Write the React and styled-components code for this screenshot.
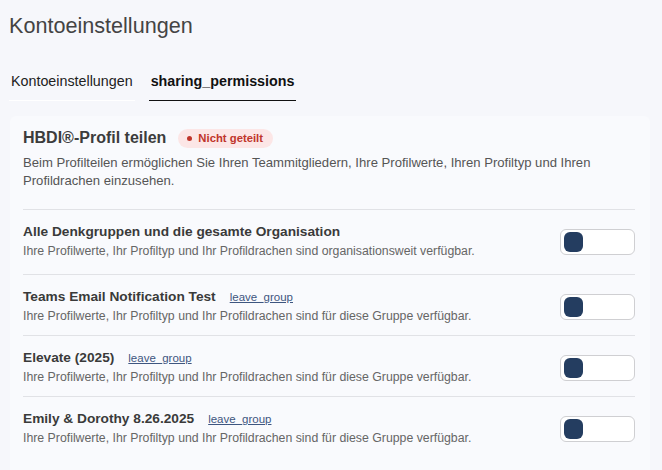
import React from 'react'
import styled, { createGlobalStyle } from 'styled-components'

const GlobalStyle = createGlobalStyle`
  body {
    margin: 0;
    background: #f6f7fb;
    font-family: "Liberation Sans", Arial, sans-serif;
  }
`

const Page = styled.div`
  width: 662px;
  height: 470px;
  overflow: hidden;
  padding: 12px 12px 0 9px;
  box-sizing: border-box;
`

const PageTitle = styled.h1`
  margin: 0;
  font-size: 21.6px;
  font-weight: 400;
  line-height: 28px;
  color: #444;
`

const Tabs = styled.div`
  display: flex;
  gap: 14px;
  margin-top: 33px;
`

const Tab = styled.div`
  padding: 0 2px 10px;
  font-size: 14.3px;
  line-height: 17px;
  color: ${p => (p.$active ? '#111' : '#222')};
  font-weight: ${p => (p.$active ? 700 : 400)};
  border-bottom: ${p => (p.$active ? '1.5px solid #111' : '1.5px solid #fff')};
`

const Card = styled.section`
  margin: 15px 0 0 1px;
  padding: 12px 15px 20px 13px;
  background: #f9fafd;
  border-radius: 6px;
`

const HeadRow = styled.div`
  display: flex;
  align-items: center;
  gap: 12px;
`

const CardTitle = styled.h2`
  margin: 0;
  font-size: 16px;
  font-weight: 700;
  color: #3c3c3c;
  line-height: 20px;
`

const Badge = styled.span`
  display: inline-flex;
  align-items: center;
  gap: 6px;
  height: 19px;
  padding: 0 10px 0 9px;
  border-radius: 10px;
  background: #fce6e6;
  color: #c0352b;
  font-size: 11.3px;
  font-weight: 700;
`

const Dot = styled.span`
  width: 5px;
  height: 5px;
  border-radius: 50%;
  background: #c0352b;
`

const Description = styled.p`
  margin: 6px 0 0;
  font-size: 13.1px;
  line-height: 18px;
  color: #555;
`

const List = styled.div`
  margin-top: 19px;
`

const Row = styled.div`
  display: flex;
  align-items: center;
  justify-content: space-between;
  padding: 14px 0 ${p => (p.$first ? '15px' : '11px')};
  border-top: 1px solid #e1e2e6;
`

const RowText = styled.div`
  display: flex;
  flex-direction: column;
  gap: 3px;
`

const RowTitle = styled.div`
  display: flex;
  align-items: baseline;
  gap: 14px;
  font-size: 13.7px;
  line-height: 16px;
  font-weight: 700;
  color: #3a3a3a;
`

const LeaveLink = styled.a`
  font-size: 11.5px;
  font-weight: 400;
  color: #3e5680;
  text-decoration: underline;
  cursor: pointer;
`

const RowDesc = styled.div`
  font-size: 12.3px;
  line-height: 16px;
  color: #666;
`

const Toggle = styled.button`
  width: 75px;
  height: 26px;
  padding: 3px;
  box-sizing: border-box;
  display: flex;
  align-items: center;
  background: #fff;
  border: 1px solid #cfcfd2;
  border-radius: 6px;
  cursor: pointer;
`

const Knob = styled.span`
  width: 19px;
  height: 20px;
  border-radius: 6px;
  background: #243d60;
`

const groups = [
  {
    name: 'Alle Denkgruppen und die gesamte Organisation',
    desc: 'Ihre Profilwerte, Ihr Profiltyp und Ihr Profildrachen sind organisationsweit verfügbar.',
    leave: false,
  },
  {
    name: 'Teams Email Notification Test',
    desc: 'Ihre Profilwerte, Ihr Profiltyp und Ihr Profildrachen sind für diese Gruppe verfügbar.',
    leave: true,
  },
  {
    name: 'Elevate (2025)',
    desc: 'Ihre Profilwerte, Ihr Profiltyp und Ihr Profildrachen sind für diese Gruppe verfügbar.',
    leave: true,
  },
  {
    name: 'Emily & Dorothy 8.26.2025',
    desc: 'Ihre Profilwerte, Ihr Profiltyp und Ihr Profildrachen sind für diese Gruppe verfügbar.',
    leave: true,
  },
]

export default function App() {
  return (
    <>
      <GlobalStyle />
      <Page>
        <PageTitle>Kontoeinstellungen</PageTitle>
        <Tabs>
          <Tab>Kontoeinstellungen</Tab>
          <Tab $active>sharing_permissions</Tab>
        </Tabs>
        <Card>
          <HeadRow>
            <CardTitle>HBDI®-Profil teilen</CardTitle>
            <Badge>
              <Dot />
              Nicht geteilt
            </Badge>
          </HeadRow>
          <Description>
            Beim Profilteilen ermöglichen Sie Ihren Teammitgliedern, Ihre Profilwerte, Ihren Profiltyp und Ihren
            Profildrachen einzusehen.
          </Description>
          <List>
            {groups.map((g, i) => (
              <Row key={g.name} $first={i === 0}>
                <RowText>
                  <RowTitle>
                    {g.name}
                    {g.leave && <LeaveLink>leave_group</LeaveLink>}
                  </RowTitle>
                  <RowDesc>{g.desc}</RowDesc>
                </RowText>
                <Toggle aria-label="toggle">
                  <Knob />
                </Toggle>
              </Row>
            ))}
          </List>
        </Card>
      </Page>
    </>
  )
}
